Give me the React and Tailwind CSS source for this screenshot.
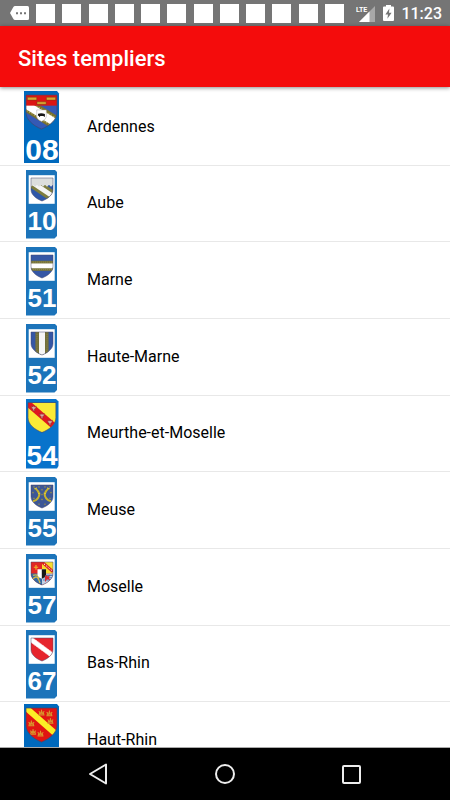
import React from "react";

const SHIELD = "M0 0H22V12C22 17.5 17 21.5 11 24C5 21.5 0 17.5 0 12Z";

function Ermine({ points, color, size = 1 }) {
  return points.map(([x, y], i) => (
    <path
      key={i}
      d="M-2 0L-.6 -.6L0 -2L.6 -.6L2 0L.6 .6L0 2L-.6 .6Z"
      fill={color}
      transform={`translate(${x} ${y}) scale(${size})`}
    />
  ));
}

function Band({ width, y, color, dash }) {
  return <path d={`M-4 ${y - 3}L26 ${y + 18}`} stroke={color} strokeWidth={width} strokeDasharray={dash} />;
}

const ARMS = {
  "08": (
    <>
      <rect width="22" height="24" fill="#3559b5" />
      <path d="M-3 5L25 22" stroke="#77712f" strokeWidth="9.5" />
      <path d="M-3 1.4L25 18.4M-3 8.8L25 25.8" stroke="#b9a95c" strokeWidth=".8" strokeDasharray="1 1" />
      <path d="M-3 5L25 22" stroke="#fff" strokeWidth="5.4" />
      <rect width="22" height="7.5" fill="#dc1512" />
      <path d="M1 1.6H7.6V3.6H1ZM14.5 1.6H21V3.6H14.5ZM7.8 4.8H14.3V6.6H7.8Z" fill="#d8a631" stroke="#6b3b12" strokeWidth=".3" />
      <path d="M7.6 10.5H14.4V15.5Q14 17.5 11 18.6Q8 17.5 7.6 15.5Z" fill="#fff" stroke="#999" strokeWidth=".3" />
      <path d="M8.6 13.2Q11 12.4 13.4 13.4V15.4H12.6V14.8H10V15.4H9.2V14.8L8.4 14.4Z" fill="#161616" />
    </>
  ),
  10: (
    <>
      <rect width="22" height="24" fill="#2f57a8" />
      <Band y={4} width={11} color="#7d7c3f" />
      <Band y={4} width={5} color="#f4f4f4" />
      <path d="M0 0H22V7L20 9L18 7L16 9L14 7L12 9L10 7L8 9L6 7L4 9L2 7L0 9Z" fill="#dcdedd" />
    </>
  ),
  51: (
    <>
      <rect width="22" height="24" fill="#3557a5" />
      <rect y="6" width="22" height="10.5" fill="#77753c" />
      <path d="M0 7.4H22M0 15.2H22" stroke="#a0975a" strokeWidth=".6" strokeDasharray="1 1" />
      <rect y="8.8" width="22" height="5" fill="#fff" />
    </>
  ),
  52: (
    <>
      <rect width="22" height="24" fill="#3557a5" />
      <rect x="4.4" width="13.2" height="24" fill="#716e3a" />
      <path d="M6 0V24M16 0V24" stroke="#a0975a" strokeWidth=".6" strokeDasharray="1 1" />
      <rect x="8" width="6" height="24" fill="#f5f5f5" />
    </>
  ),
  54: (
    <>
      <rect width="22" height="24" fill="#fbea36" />
      <path d="M-1 0L24 22" stroke="#df1820" strokeWidth="5" />
      {[[4.5, 4.5], [11, 10.5], [17.3, 15.8]].map(([x, y]) => (
        <path key={x} d="M0 -2L.6 -1L2 -1.6L1.5 .3L.6 .7L.8 2H-.8L-.6 .7L-1.5 .3L-2 -1.6L-.6 -1Z" fill="#d9a8a4" stroke="#892828" strokeWidth=".4" transform={`translate(${x} ${y})`} />
      ))}
    </>
  ),
  55: (
    <>
      <rect width="22" height="24" fill="#3d5796" />
      <Ermine color="#9c9144" size={0.65} points={[[3, 2], [8, 2], [14, 2], [19, 2], [11, 5], [11, 10], [11, 15], [2, 8], [20, 8], [3, 14], [19, 14], [8, 20], [14, 20]]} />
      <path d="M4.5 3.5Q10.5 9 6.8 14Q5 16.5 2 17M17.5 3.5Q11.5 9 15.2 14Q17 16.5 20 17" fill="none" stroke="#c8b32c" strokeWidth="2" />
      <path d="M3.2 4L6 3M18.8 4L16 3M7 9L9.3 8.5M15 9L12.7 8.5" stroke="#e0ca3b" strokeWidth="1" />
    </>
  ),
  57: (
    <>
      <rect width="22" height="24" fill="#e22724" />
      <path d="M5 3V8M2.8 5.5H7.2" stroke="#efb42c" strokeWidth="1.2" />
      <path d="M11 0H22V12H11Z" fill="#f6dc2d" />
      <path d="M11 0L22 10" stroke="#dc2420" strokeWidth="3" />
      <path d="M13 2L21 9" stroke="#fff" strokeWidth="1" strokeDasharray="1.4 1.6" />
      <path d="M0 12H11V24H0Z" fill="#3368a4" />
      <path d="M1 19Q6 11 9 22M2 14Q7 12 8 17" fill="none" stroke="#d0b94a" strokeWidth="1.4" />
      <path d="M11 12H22V24H11Z" fill="#c4d0e2" />
      <path d="M12 14H22M12 16.4H22M12 18.8H22" stroke="#4f80b5" strokeWidth="1.2" />
      <path d="M14 12.5L17 15L19 13L18 17L20 19L16 18L14 21L14 17Z" fill="#d82934" />
      <path d="M6.5 7.5H15V13Q14.5 16 10.8 17.5Q7 16 6.5 13Z" fill="#fff" />
      <path d="M10.8 7.5H15V13Q14.5 16 10.8 17.5Z" fill="#171717" />
    </>
  ),
  67: (
    <>
      <rect width="22" height="24" fill="#e6252d" />
      <path d="M-2 0L24 20" stroke="#fff" strokeWidth="5" />
      <path d="M-2 -3L24 17M-2 3L24 23" stroke="#f6c9cb" strokeWidth="1" strokeDasharray="1.2 1" />
    </>
  ),
  68: (
    <>
      <rect width="22" height="24" fill="#e11512" />
      <path d="M-1 -1L24 20.8" stroke="#fcee26" strokeWidth="4.2" />
      {[[11, 3.4], [16.6, 4], [17.3, 9.2], [3.8, 11], [5, 17], [10.3, 18.2]].map(([x, y]) => (
        <g key={`${x}-${y}`} transform={`translate(${x} ${y})`} stroke="#d8962d" strokeWidth=".75" fill="none">
          <path d="M-1.7 1.5H1.7L1.3 -.2L.5 .6L0 -1.6L-.5 .6L-1.3 -.2ZM-2 -1L-1 -.3M2 -1L1 -.3M0 -2.2V-1.4" />
        </g>
      ))}
    </>
  ),
};

const REGULAR = {
  plate: "M2 3H31L33 5V69L30.5 71.5H2Z",
  fill: "#1c74ba",
  window: true,
  arms: "translate(7 11) scale(1 .96)",
  x: 18,
  y: 63,
  text: "text-[26px]",
};
const LARGE = {
  plate: "M0 0H33L35 2.5V72H0Z",
  fill: "#0069bd",
  arms: "translate(2 4) scale(1.41 1.42)",
  x: 18,
  y: 69,
  text: "text-[30px]",
};
const MEDIUM = {
  plate: "M2 2H32L34.5 4.5V69L33 71.5H2Z",
  fill: "#0873cb",
  arms: "translate(4 5.5) scale(1.27 1.25)",
  x: 18,
  y: 68,
  text: "text-[28px]",
};

const SITES = [
  { code: "08", name: "Ardennes", style: LARGE },
  { code: "10", name: "Aube", style: REGULAR },
  { code: "51", name: "Marne", style: REGULAR },
  { code: "52", name: "Haute-Marne", style: REGULAR },
  { code: "54", name: "Meurthe-et-Moselle", style: MEDIUM },
  { code: "55", name: "Meuse", style: REGULAR },
  { code: "57", name: "Moselle", style: REGULAR },
  { code: "67", name: "Bas-Rhin", style: REGULAR },
  { code: "68", name: "Haut-Rhin", style: LARGE },
];

function Plate({ code, style }) {
  return (
    <svg aria-hidden="true" width="36" height="72" viewBox="0 0 36 72" className="shrink-0 overflow-visible">
      <path d={style.plate} fill={style.fill} />
      {style.window && <rect x="4.7" y="8.2" width="26" height="28.6" fill="#fff" />}
      <g transform={style.arms}>
        <clipPath id={`shield-${code}`}>
          <path d={SHIELD} />
        </clipPath>
        <g clipPath={`url(#shield-${code})`}>{ARMS[code]}</g>
        <path d={SHIELD} fill="none" stroke="#44466a" strokeWidth=".5" />
      </g>
      <text
        x={style.x}
        y={style.y}
        textAnchor="middle"
        fill="#fff"
        className={`font-['Liberation_Sans',sans-serif] font-bold ${style.text}`}
      >
        {code}
      </text>
    </svg>
  );
}

function StatusBar() {
  return (
    <div className="flex h-[26px] shrink-0 items-center justify-between bg-[#757575] pl-[10px] pr-2 text-white">
      <div className="flex items-center gap-[7px]">
        <svg width="19" height="14" viewBox="0 0 19 14" aria-hidden="true">
          <path d="M5 0H17.5Q19 0 19 1.5V12.5Q19 14 17.5 14H5Q4 14 3.4 13L0 7L3.4 1Q4 0 5 0Z" fill="#fff" />
          <path d="M6 6.2H8V8.2H6ZM10 6.2H12V8.2H10ZM14 6.2H16V8.2H14Z" fill="#757575" />
        </svg>
        <div className="flex w-[308px] justify-between">
          {Array.from({ length: 12 }, (_, i) => (
            <span key={i} className="h-[19px] w-[19px] bg-white" />
          ))}
        </div>
      </div>
      <div className="flex items-center gap-[7px]">
        <svg width="20" height="17" viewBox="0 0 20 17" aria-hidden="true">
          <path d="M19 1V17H3Z" fill="#a8a8a8" />
          <path d="M13.5 6.5V17H3Z" fill="#fff" />
          <path d="M0 0H11V8.5H0Z" fill="#757575" />
          <text x="0" y="7" fill="#fff" className="font-[Roboto,sans-serif] text-[7px] font-bold">
            LTE
          </text>
        </svg>
        <svg width="11" height="16" viewBox="0 0 11 16" aria-hidden="true">
          <path d="M3 0H8V1.5H10Q11 1.5 11 2.5V15Q11 16 10 16H1Q0 16 0 15V2.5Q0 1.5 1 1.5H3Z" fill="#fff" />
          <path d="M6.4 3.5L2.4 9.5H5L4.4 13.8L8.6 7.8H6Z" fill="#757575" />
        </svg>
        <time className="pt-0.5 text-base leading-5 font-medium">11:23</time>
      </div>
    </div>
  );
}

function NavButton({ label, children }) {
  return (
    <button type="button" aria-label={label} className="flex items-center justify-center">
      <svg width="24" height="24" viewBox="0 0 24 24" fill="none" stroke="#ededed" strokeWidth="2" strokeLinejoin="round" aria-hidden="true">
        {children}
      </svg>
    </button>
  );
}

export default function App() {
  return (
    <div className="flex h-screen flex-col overflow-hidden bg-white font-[Roboto,sans-serif]">
      <StatusBar />
      <header className="z-10 flex h-[61px] shrink-0 items-center bg-[#f40c0c] px-[18px] pt-1 shadow-[0_1px_4px_rgba(0,0,0,0.45)]">
        <h1 className="text-[22px] leading-7 font-medium text-white">Sites templiers</h1>
      </header>
      <main className="min-h-0 flex-1 overflow-hidden pt-0.5">
        <ul className="grid h-[690px] auto-rows-fr">
          {SITES.map((site) => (
            <li key={site.code} className="min-h-0 border-b border-[#e8e8e8]">
              <button type="button" className="flex h-full w-full items-center gap-[27px] pl-6 text-left">
                <Plate code={site.code} style={site.style} />
                <span className="text-base leading-4 text-black">{site.name}</span>
              </button>
            </li>
          ))}
        </ul>
      </main>
      <nav className="z-10 flex h-[53px] shrink-0 items-stretch justify-center border-t border-[#aaa] bg-black">
        <div className="grid w-[380px] grid-cols-3">
          <NavButton label="Retour">
            <path d="M20 2.5V21.5L4 12Z" />
          </NavButton>
          <NavButton label="Accueil">
            <circle cx="12" cy="12" r="9" />
          </NavButton>
          <NavButton label="Applications récentes">
            <rect x="3" y="4" width="17" height="17" rx="1" />
          </NavButton>
        </div>
      </nav>
    </div>
  );
}
